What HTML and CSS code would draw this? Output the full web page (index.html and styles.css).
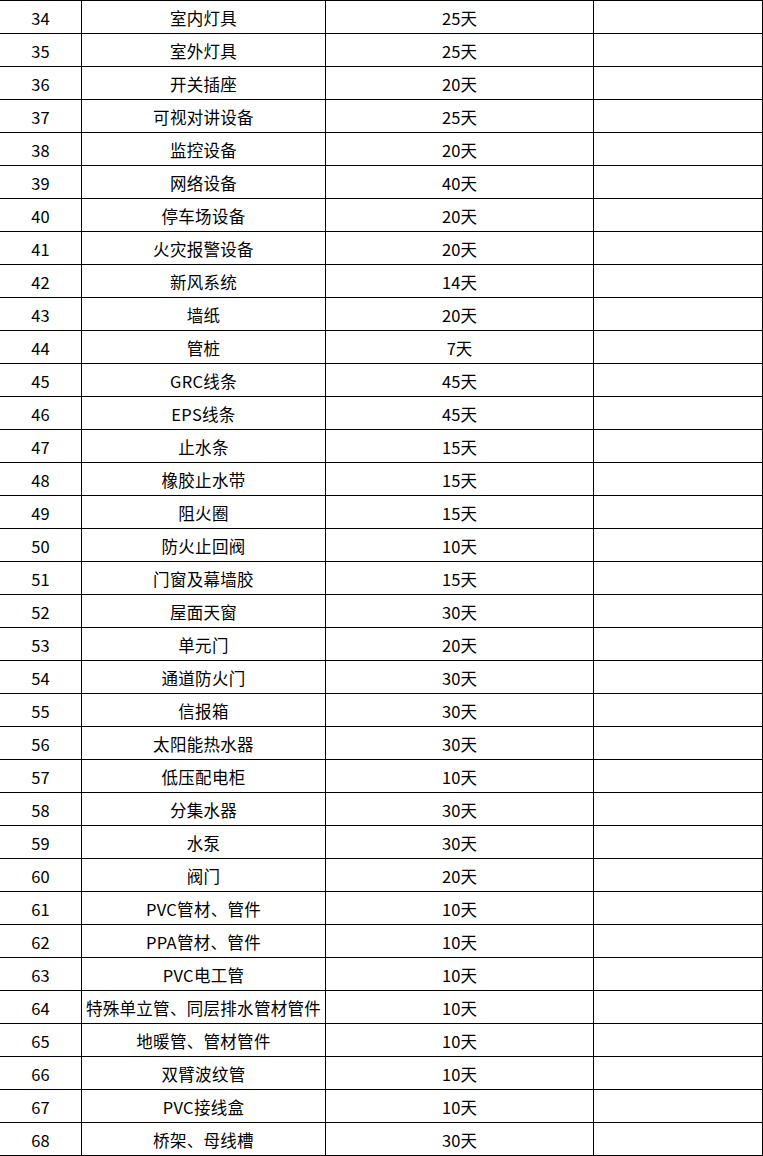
FILE: index.html
```html
<!DOCTYPE html>
<html lang="zh-CN">
<head>
<meta charset="utf-8">
<title>材料周期表</title>
<link rel="stylesheet" href="styles.css">
</head>
<body>
<div class="sheet">
<div class="row"><div class="c c1">34</div><div class="c c2">室内灯具</div><div class="c c3">25天</div><div class="c c4"></div></div>
<div class="row"><div class="c c1">35</div><div class="c c2">室外灯具</div><div class="c c3">25天</div><div class="c c4"></div></div>
<div class="row"><div class="c c1">36</div><div class="c c2">开关插座</div><div class="c c3">20天</div><div class="c c4"></div></div>
<div class="row"><div class="c c1">37</div><div class="c c2">可视对讲设备</div><div class="c c3">25天</div><div class="c c4"></div></div>
<div class="row"><div class="c c1">38</div><div class="c c2">监控设备</div><div class="c c3">20天</div><div class="c c4"></div></div>
<div class="row"><div class="c c1">39</div><div class="c c2">网络设备</div><div class="c c3">40天</div><div class="c c4"></div></div>
<div class="row"><div class="c c1">40</div><div class="c c2">停车场设备</div><div class="c c3">20天</div><div class="c c4"></div></div>
<div class="row"><div class="c c1">41</div><div class="c c2">火灾报警设备</div><div class="c c3">20天</div><div class="c c4"></div></div>
<div class="row"><div class="c c1">42</div><div class="c c2">新风系统</div><div class="c c3">14天</div><div class="c c4"></div></div>
<div class="row"><div class="c c1">43</div><div class="c c2">墙纸</div><div class="c c3">20天</div><div class="c c4"></div></div>
<div class="row"><div class="c c1">44</div><div class="c c2">管桩</div><div class="c c3">7天</div><div class="c c4"></div></div>
<div class="row"><div class="c c1">45</div><div class="c c2">GRC线条</div><div class="c c3">45天</div><div class="c c4"></div></div>
<div class="row"><div class="c c1">46</div><div class="c c2">EPS线条</div><div class="c c3">45天</div><div class="c c4"></div></div>
<div class="row"><div class="c c1">47</div><div class="c c2">止水条</div><div class="c c3">15天</div><div class="c c4"></div></div>
<div class="row"><div class="c c1">48</div><div class="c c2">橡胶止水带</div><div class="c c3">15天</div><div class="c c4"></div></div>
<div class="row"><div class="c c1">49</div><div class="c c2">阻火圈</div><div class="c c3">15天</div><div class="c c4"></div></div>
<div class="row"><div class="c c1">50</div><div class="c c2">防火止回阀</div><div class="c c3">10天</div><div class="c c4"></div></div>
<div class="row"><div class="c c1">51</div><div class="c c2">门窗及幕墙胶</div><div class="c c3">15天</div><div class="c c4"></div></div>
<div class="row"><div class="c c1">52</div><div class="c c2">屋面天窗</div><div class="c c3">30天</div><div class="c c4"></div></div>
<div class="row"><div class="c c1">53</div><div class="c c2">单元门</div><div class="c c3">20天</div><div class="c c4"></div></div>
<div class="row"><div class="c c1">54</div><div class="c c2">通道防火门</div><div class="c c3">30天</div><div class="c c4"></div></div>
<div class="row"><div class="c c1">55</div><div class="c c2">信报箱</div><div class="c c3">30天</div><div class="c c4"></div></div>
<div class="row"><div class="c c1">56</div><div class="c c2">太阳能热水器</div><div class="c c3">30天</div><div class="c c4"></div></div>
<div class="row"><div class="c c1">57</div><div class="c c2">低压配电柜</div><div class="c c3">10天</div><div class="c c4"></div></div>
<div class="row"><div class="c c1">58</div><div class="c c2">分集水器</div><div class="c c3">30天</div><div class="c c4"></div></div>
<div class="row"><div class="c c1">59</div><div class="c c2">水泵</div><div class="c c3">30天</div><div class="c c4"></div></div>
<div class="row"><div class="c c1">60</div><div class="c c2">阀门</div><div class="c c3">20天</div><div class="c c4"></div></div>
<div class="row"><div class="c c1">61</div><div class="c c2">PVC管材、管件</div><div class="c c3">10天</div><div class="c c4"></div></div>
<div class="row"><div class="c c1">62</div><div class="c c2">PPA管材、管件</div><div class="c c3">10天</div><div class="c c4"></div></div>
<div class="row"><div class="c c1">63</div><div class="c c2">PVC电工管</div><div class="c c3">10天</div><div class="c c4"></div></div>
<div class="row"><div class="c c1">64</div><div class="c c2">特殊单立管、同层排水管材管件</div><div class="c c3">10天</div><div class="c c4"></div></div>
<div class="row"><div class="c c1">65</div><div class="c c2">地暖管、管材管件</div><div class="c c3">10天</div><div class="c c4"></div></div>
<div class="row"><div class="c c1">66</div><div class="c c2">双臂波纹管</div><div class="c c3">10天</div><div class="c c4"></div></div>
<div class="row"><div class="c c1">67</div><div class="c c2">PVC接线盒</div><div class="c c3">10天</div><div class="c c4"></div></div>
<div class="row"><div class="c c1">68</div><div class="c c2">桥架、母线槽</div><div class="c c3">30天</div><div class="c c4"></div></div>
</div>
</body>
</html>
```

FILE: styles.css
```css
html, body {
  margin: 0;
  padding: 0;
  background: #fff;
}

.sheet {
  width: 763px;
  font-family: "Noto Sans CJK SC", "Noto Sans", sans-serif;
  font-size: 16.5px;
  color: #000;
  border-bottom: 1px solid #000;
}

.row {
  display: grid;
  grid-template-columns: 82px 244px 268px 169px;
  height: 33px;
  box-sizing: border-box;
  border-top: 1px solid #000;
}

.c {
  box-sizing: border-box;
  border-right: 1px solid #000;
  display: flex;
  align-items: center;
  justify-content: center;
  padding-top: 3px;
  white-space: nowrap;
  overflow: hidden;
  line-height: 1;
}

.c2 {
  letter-spacing: 0.3px;
}
```
